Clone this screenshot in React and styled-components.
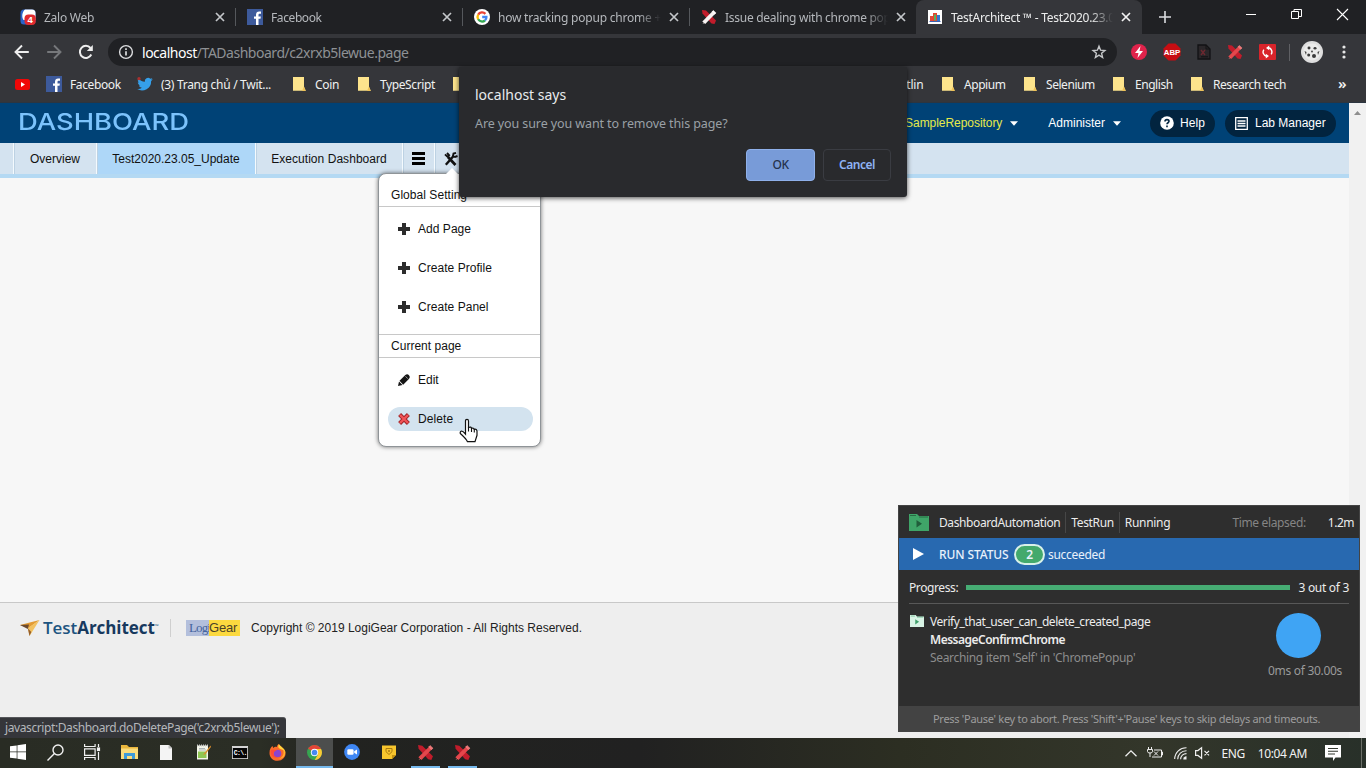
import React from "react";
import styled, { createGlobalStyle } from "styled-components";

const ui = '"Noto Sans", "Open Sans", sans-serif';
const arial = '"Liberation Sans", Arial, sans-serif';

const Global = createGlobalStyle`
  * { box-sizing: border-box; }
  body { margin: 0; overflow: hidden; font-family: ${ui}; font-size: 12px; }
  svg { display: block; flex: none; overflow: visible; }
`;

const Screen = styled.div`
  position: relative;
  width: 1366px;
  height: 768px;
  overflow: hidden;
  display: flex;
  flex-direction: column;
`;

const Label = styled.span`
  white-space: nowrap;
  font-size: ${(p) => p.$size || 12}px;
  letter-spacing: ${(p) => p.$ls ?? -0.3}px;
  color: ${(p) => p.$color || "inherit"};
  font-weight: ${(p) => p.$weight || 400};
`;

/* ---------- browser chrome ---------- */
const TabStrip = styled.div`
  flex: none;
  height: 34px;
  background: #202124;
  display: flex;
  padding-left: 9px;
`;
const Tab = styled.div`
  width: ${(p) => (p.$active ? 226 : 227)}px;
  height: 34px;
  padding: 0 12px 0 ${(p) => (p.$active ? 12 : 11)}px;
  margin-left: ${(p) => (p.$active ? -1 : 0)}px;
  display: flex;
  align-items: center;
  color: ${(p) => (p.$active ? "#eceded" : "#b5b8bc")};
  background: ${(p) => (p.$active ? "#35363a" : "transparent")};
  border-radius: 8px 8px 0 0;
`;
const TabTitle = styled.div`
  width: ${(p) => p.$w || 163}px;
  margin: 0 9px 0 ${(p) => p.$ml || 8}px;
  overflow: hidden;
  white-space: nowrap;
  letter-spacing: ${(p) => p.$ls ?? -0.25}px;
  mask-image: linear-gradient(90deg, #000 86%, transparent);
`;
const TabRule = styled.div`
  width: 1px;
  height: 18px;
  margin: 8px 0 0 -1px;
  background: #55585c;
`;
const WindowButtons = styled.div`
  display: flex;
  align-items: center;
  height: 28px;
  margin-left: auto;
  padding-right: 18px;
  gap: 35px;
`;
const NewTab = styled.div`
  padding: 11px 0 0 17px;
`;
const Toolbar = styled.div`
  flex: none;
  height: 35px;
  background: #35363a;
  display: flex;
  align-items: center;
  padding: 1px 15px 0 14px;
`;
const NavButtons = styled.div`
  display: flex;
  gap: 16px;
  margin-right: 14px;
`;
const Omnibox = styled.div`
  width: 1009px;
  height: 28px;
  border-radius: 14px;
  background: #202124;
  display: flex;
  align-items: center;
  padding: 0 10px;
  color: #8e9195;
`;
const Url = styled.div`
  margin-left: 8px;
  flex: 1;
  font-size: 14px;
  letter-spacing: -0.48px;
  white-space: nowrap;
  b { font-weight: 400; color: #fff; }
`;
const Extensions = styled.div`
  display: flex;
  align-items: center;
  gap: 16px;
  margin-left: 14px;
`;
const ToolRule = styled.div`
  width: 1px;
  height: 17px;
  margin: 0 11px 0 13px;
  background: #5f6064;
`;
const MoreButton = styled.div`
  margin-left: 19px;
`;
const Bookmarks = styled.div`
  flex: none;
  height: 34px;
  background: #35363a;
  border-bottom: 1px solid #2c3540;
  display: flex;
  align-items: center;
  padding: 0 0 3px 15px;
  color: #f0f1f1;
`;
const Bookmark = styled.div`
  flex: none;
  width: ${(p) => p.$w}px;
  display: flex;
  align-items: center;
  gap: ${(p) => p.$gap || 8}px;
`;
const Overflow = styled.div`
  font-size: 15px;
  font-weight: 600;
  line-height: 16px;
  padding: 0 0 2px 2px;
`;

/* ---------- page ---------- */
const PageArea = styled.div`
  height: 635px;
  flex: none;
  display: flex;
  background: #f7f7f7;
  font-family: ${arial};
`;
const Page = styled.div`
  width: 1349px;
  display: flex;
  flex-direction: column;
`;
const ScrollTrack = styled.div`
  width: 17px;
  background: #f1f1f1;
  display: flex;
  justify-content: center;
  padding-top: 8px;
`;
const Header = styled.div`
  height: 40px;
  background: #004276;
  display: flex;
  align-items: center;
  padding: 0 13px 0 18px;
  color: #fff;
`;
const Brand = styled.div`
  font-family: Inter, sans-serif;
  font-size: 23.4px;
  font-weight: 500;
  letter-spacing: 0;
  color: #7cc3fc;
  padding-bottom: 3px;
  margin-right: auto;
  transform: scaleX(1.17);
  transform-origin: left center;
`;
const HeaderLink = styled.div`
  display: flex;
  align-items: center;
  gap: 8px;
  margin-right: ${(p) => p.$mr}px;
  color: ${(p) => (p.$yellow ? "#e6ea4a" : "#fff")};
`;
const Pill = styled.div`
  width: ${(p) => p.$w}px;
  height: 27px;
  margin-left: ${(p) => p.$ml || 0}px;
  border-radius: 14px;
  background: #02243f;
  display: flex;
  align-items: center;
  padding-left: ${(p) => p.$pl}px;
  gap: ${(p) => p.$gap}px;
`;
const NavBar = styled.div`
  height: 35px;
  background: #d4e3f0;
  border-bottom: 4px solid #b4d9f3;
  display: flex;
  padding-left: 13px;
`;
const NavItem = styled.div`
  width: ${(p) => p.$w}px;
  height: 31px;
  border-left: 1px solid #f4fafe;
  box-shadow: inset 1px 0 #bdd2e3;
  background: ${(p) => (p.$active ? "#aed7f8" : "transparent")};
  display: flex;
  align-items: center;
  justify-content: center;
  color: #111;
`;
const Content = styled.div`
  flex: 1;
`;
const Footer = styled.div`
  height: 136px;
  background: #eeeeee;
  border-top: 1px solid #c8c8c8;
  display: flex;
  align-items: flex-start;
  padding: 15px 0 0 20px;
  color: #222;
`;
const FooterItem = styled.div`
  display: flex;
  align-items: center;
  height: 20px;
  margin-right: ${(p) => p.$mr || 0}px;
`;
const TaName = styled.div`
  width: 116px;
  white-space: nowrap;
  font-family: "Open Sans", sans-serif;
  font-size: 17px;
  font-weight: 600;
  letter-spacing: -0.05px;
  color: #1d5480;
  margin: -2px 0 0 3px;
  b { color: #17395e; font-weight: 700; }
  small { font-size: 5px; vertical-align: 6px; letter-spacing: 0; }
`;
const FootRule = styled.div`
  width: 1px;
  height: 18px;
  background: #cfcfcf;
`;
const LogiLogo = styled.div`
  width: 54px;
  height: 16px;
  display: flex;
  font-size: 13px;
  line-height: 16px;
  span:first-child {
    width: 23px;
    padding-left: 3px;
    background: #b3bfdc;
    color: #44639e;
    font-family: "Liberation Serif", serif;
    letter-spacing: -0.9px;
    font-size: 13px;
  }
  span:last-child {
    width: 31px;
    background: #fcd93f;
    color: #4b4128;
    font-family: "Liberation Sans", sans-serif;
    letter-spacing: -0.2px;
  }
`;

/* ---------- settings menu ---------- */
const Menu = styled.div`
  position: absolute;
  left: 378px;
  top: 173px;
  width: 163px;
  height: 274px;
  background: #fff;
  border: 1px solid #8f9498;
  border-radius: 8px;
  box-shadow: 0 0 4px rgba(0, 0, 0, 0.55);
  font-family: ${arial};
  color: #111;
  display: flex;
  flex-direction: column;
`;
const MenuNotch = styled.div`
  position: absolute;
  left: 67px;
  top: -6px;
  border: 6px solid transparent;
  border-top: 0;
  border-bottom-color: #fff;
`;
const MenuHeading = styled.div`
  height: ${(p) => p.$h}px;
  padding: ${(p) => p.$pt}px 0 0 12px;
  line-height: 14px;
  border-top: ${(p) => (p.$top ? "1px solid #c8c8c8" : "0")};
  border-bottom: 1px solid #c8c8c8;
`;
const MenuGroup = styled.div`
  height: ${(p) => p.$h}px;
  padding: 10px 7px 0 9px;
  display: flex;
  flex-direction: column;
  gap: 15px;
`;
const MenuItem = styled.div`
  height: 24px;
  flex: none;
  padding-left: 10px;
  border-radius: 12px;
  display: flex;
  align-items: center;
  gap: 8px;
  background: ${(p) => (p.$hover ? "#d3e3ef" : "transparent")};
`;
const Pointer = styled.svg`
  position: absolute;
  left: 459px;
  top: 418px;
`;

/* ---------- dialog ---------- */
const Dialog = styled.div`
  position: absolute;
  left: 459px;
  top: 67px;
  width: 448px;
  height: 130px;
  background: #292a2d;
  border-radius: 0 0 3px 3px;
  box-shadow: 0 1px 5px rgba(0, 0, 0, 0.7);
  padding: 18px 16px 16px;
  display: flex;
  flex-direction: column;
`;
const DialogTitle = styled.div`
  font-size: 14px;
  line-height: 20px;
  letter-spacing: 0;
  color: #e8eaed;
`;
const DialogText = styled.div`
  margin-top: 10px;
  font-size: 12.5px;
  line-height: 18px;
  letter-spacing: -0.1px;
  color: #9aa0a6;
`;
const DialogActions = styled.div`
  margin-top: auto;
  display: flex;
  justify-content: flex-end;
  gap: 8px;
`;
const DialogButton = styled.div`
  width: ${(p) => (p.$primary ? 69 : 68)}px;
  height: 32px;
  padding-bottom: 1px;
  border-radius: 4px;
  border: 1px solid ${(p) => (p.$primary ? "#8fb0ea" : "#3a3c42")};
  background: ${(p) => (p.$primary ? "#789bd8" : "transparent")};
  color: ${(p) => (p.$primary ? "#25324c" : "#8fb3f5")};
  font-weight: ${(p) => (p.$primary ? 500 : 600)};
  font-size: 12px;
  letter-spacing: -0.5px;
  display: flex;
  align-items: center;
  justify-content: center;
`;

const StatusBubble = styled.div`
  position: absolute;
  left: 0;
  top: 717px;
  width: 286px;
  height: 21px;
  padding-left: 5px;
  background: #35363a;
  border-radius: 0 3px 0 0;
  border-top: 1px solid #55565a;
  color: #b4b7ba;
  line-height: 20px;
`;

/* ---------- run panel ---------- */
const RunPanel = styled.div`
  position: absolute;
  left: 898px;
  top: 505px;
  width: 462px;
  height: 227px;
  background: #2e2e2e;
  border: 1px solid #444;
  color: #ececec;
  display: flex;
  flex-direction: column;
`;
const RunHead = styled.div`
  height: 32px;
  display: flex;
  align-items: center;
  padding: 0 5px 0 10px;
  gap: 5px;
`;
const ProjectName = styled.div`
  margin-left: 5px;
`;
const RunRule = styled.div`
  width: 1px;
  height: 21px;
  background: #474747;
`;
const Elapsed = styled.div`
  margin: 0 17px 0 auto;
  color: #858585;
`;
const RunStatus = styled.div`
  height: 32px;
  background: #2869b0;
  display: flex;
  align-items: center;
  padding-left: 14px;
  color: #e8f1fb;
`;
const StatusName = styled.div`
  width: 70px;
  margin-left: 15px;
`;
const CountBadge = styled.div`
  width: 31px;
  height: 21px;
  margin: 0 3px 0 5px;
  border: 2px solid #d8f0e8;
  border-radius: 11px;
  background: #43a96c;
  display: flex;
  align-items: center;
  justify-content: center;
`;
const ProgressRow = styled.div`
  height: 34px;
  margin: 0 10px;
  padding-top: 2px;
  display: flex;
  align-items: center;
  justify-content: space-between;
  border-bottom: 1px solid #585858;
`;
const ProgressBar = styled.div`
  width: 324px;
  height: 5px;
  background: #46ad74;
`;
const TestRow = styled.div`
  flex: 1;
  display: flex;
  padding: 9px 17px 0 11px;
`;
const TestIcon = styled.div`
  padding-top: 2px;
`;
const TestText = styled.div`
  margin-left: 6px;
  flex: 1;
  display: flex;
  flex-direction: column;
  line-height: 18px;
`;
const Timer = styled.div`
  display: flex;
  flex-direction: column;
  align-items: center;
  gap: 4px;
`;
const TimerDisc = styled.div`
  width: 45px;
  height: 45px;
  margin-right: 13px;
  border-radius: 50%;
  background: #3fa4f4;
`;
const PanelFoot = styled.div`
  height: 25px;
  background: #434343;
  display: flex;
  align-items: center;
  padding-left: 34px;
`;

/* ---------- taskbar ---------- */
const Taskbar = styled.div`
  flex: none;
  height: 30px;
  background: linear-gradient(90deg, #292c24 0, #2b2e25 260px, #222320 330px, #212121 640px, #2c2e22 900px, #33362a 1150px, #283029 1366px);
  display: flex;
  color: #f3f3f3;
`;
const TaskButton = styled.div`
  width: 37px;
  height: 30px;
  display: flex;
  align-items: center;
  justify-content: center;
  background: ${(p) => (p.$active ? "#4c4e4d" : "transparent")};
  border-bottom: 2px solid ${(p) => (p.$open ? "#76b9ed" : "transparent")};
  background-clip: padding-box;
  ${(p) => p.$open && !p.$active && "width: 29px; margin: 0 4px;"}
  &:nth-child(-n + 9) {
    padding-right: 1px;
  }
`;
const Tray = styled.div`
  margin-left: auto;
  display: flex;
  align-items: center;
`;
const TrayItem = styled.div`
  margin-right: ${(p) => p.$mr}px;
`;
const ShowDesktop = styled.div`
  width: 5px;
  height: 30px;
  border-left: 1px solid #6b6f68;
`;

/* ---------- drawings ---------- */
const Close = ({ size = 8, color = "#c4c7ca", sw = 1.7 }) => (
  <svg width={size} height={size} viewBox="0 0 8 8">
    <path d="M0 0L8 8M8 0L0 8" stroke={color} strokeWidth={(sw * 8) / size} />
  </svg>
);
const FacebookIcon = () => (
  <svg width="16" height="16" viewBox="0 0 16 16">
    <rect width="16" height="16" fill="#3d5a9b" />
    <path d="M9 16V9.800H7V7.400h2V5.800C9 3.600 10.200 2.400 12.200 2.400h1.800v2.300h-1.300c-.9 0-1.200.4-1.200 1.300v1.400h2.400l-.4 2.400h-2V16z" fill="#fff" />
  </svg>
);
const ZaloIcon = () => (
  <svg width="16" height="16" viewBox="0 0 16 16">
    <path d="M4 .5h8A3.500 3.500 0 0 1 15.500 4v8a3.500 3.500 0 0 1-3.500 3.500H4A3.500 3.500 0 0 1 .5 12V4A3.500 3.500 0 0 1 4 .5z" fill="#2a62c9" />
    <path d="M5 .5h7A3.500 3.500 0 0 1 15.500 4v7H3.500C1.500 8 2 3 5 .5z" fill="#fff" />
    <rect x="4.500" y="5.500" width="11.300" height="10.500" rx="4" fill="#e02a2d" />
    <text x="10.200" y="14.200" textAnchor="middle" fontFamily="Liberation Sans, sans-serif" fontWeight="700" fontSize="9.500" fill="#fff">4</text>
  </svg>
);
const GoogleIcon = () => (
  <svg width="16" height="16" viewBox="0 0 16 16">
    <circle cx="8" cy="8" r="8" fill="#fff" />
    <g fill="none" strokeWidth="2.300">
      <path d="M11.400 4.900A4.500 4.500 0 0 0 4.200 5.700" stroke="#ea4335" />
      <path d="M4.200 5.700a4.500 4.500 0 0 0 0 4.600" stroke="#fbbc05" />
      <path d="M4.200 10.300a4.500 4.500 0 0 0 6.800 1.200" stroke="#34a853" />
      <path d="M11 11.500A4.500 4.500 0 0 0 12.400 8H8.200" stroke="#4285f4" />
    </g>
  </svg>
);
const XTool = ({ s = 16, light }) => (
  <svg width={s} height={s} viewBox="0 0 16 16">
    <path d="M1 1l4 .6 10 10-1.500 3.400-3-.6L1.500 4.500z" fill="#c11c2b" />
    <path d="M1.300 12.500L12 1.800l2.700 2.400L4.200 15z" fill={light ? "#f8f2f2" : "#e4474c"} />
    <path d="M11 2.800l1.300-1.300 2.700 2.400-1.300 1.400zM2 14.800l1.500-1.500" stroke={light ? "#f8f2f2" : "#ef8585"} fill={light ? "#fff" : "#ee7777"} strokeWidth=".6" />
  </svg>
);
const ChartIcon = () => (
  <svg width="14" height="14" viewBox="0 0 14 14">
    <rect width="14" height="14" fill="#fff" />
    <rect x="2" y="6" width="3" height="5" fill="#e14a3b" />
    <rect x="5" y="3" width="4" height="8" fill="#e8432f" />
    <rect x="6" y="4.500" width="2" height="6" fill="#59b05f" />
    <rect x="9" y="5" width="3" height="6" fill="#3179cf" />
    <path d="M1.500 11.500h11" stroke="#3d5fb0" />
  </svg>
);
const Arrow = ({ flip, color }) => (
  <svg width="16" height="16" viewBox="0 0 16 16">
    <path d="M14.800 8H1.800M8 1.500L1.500 8L8 14.500" fill="none" stroke={color} strokeWidth="1.900" transform={flip ? "rotate(180 8 8)" : undefined} />
  </svg>
);
const Reload = () => (
  <svg width="16" height="16" viewBox="0 0 16 16">
    <path d="M13.300 10.500A6 6 0 1 1 12.500 4" fill="none" stroke="#eee" strokeWidth="2" />
    <path d="M14.800 1v6H8.800z" fill="#eee" />
  </svg>
);
const Info = () => (
  <svg width="16" height="16" viewBox="0 0 16 16">
    <circle cx="8" cy="8" r="6.400" fill="none" stroke="#dcdddf" strokeWidth="1.400" />
    <path d="M8 7.200v4.300M8 4.300v1.700" stroke="#dcdddf" strokeWidth="1.700" />
  </svg>
);
const Star = () => (
  <svg width="16" height="16" viewBox="0 0 16 16">
    <path d="M8 2.200l1.600 4 4.300.3-3.300 2.800 1 4.200L8 11.200l-3.600 2.300 1-4.200L2.100 6.500l4.300-.3z" fill="none" stroke="#c6c8ca" strokeWidth="1.400" />
  </svg>
);
const BoltIcon = () => (
  <svg width="16" height="16" viewBox="0 0 16 16">
    <circle cx="8" cy="8" r="8" fill="#e0234b" />
    <path d="M9.500 2L4 9h3.500L6.500 14 12 7H8.500z" fill="#fff" />
  </svg>
);
const AbpIcon = () => (
  <svg width="18" height="18" viewBox="0 0 18 18">
    <path d="M5.500 0.500h7l5 5v7l-5 5h-7l-5-5v-7z" fill="#c70d12" />
    <text x="9" y="11.800" textAnchor="middle" fontFamily="Liberation Sans, sans-serif" fontWeight="700" fontSize="7.800" fill="#fff">ABP</text>
  </svg>
);
const DocIcon = () => (
  <svg width="14" height="16" viewBox="0 0 14 16">
    <path d="M1 1h8l4 4v10H1z" fill="#2a2629" stroke="#121214" strokeWidth="1.300" />
    <path d="M9 1v4h4M4 12.800h7" fill="none" stroke="#121214" />
    <path d="M4 6l4 5M8 6l-4 5" stroke="#6d2830" strokeWidth="1.400" />
  </svg>
);
const SyncIcon = () => (
  <svg width="17" height="16" viewBox="0 0 17 16">
    <rect width="17" height="16" rx="1" fill="#d9242b" />
    <path d="M9.500 3.800a4.200 4.200 0 0 1 2.600 6.600M7.500 12.200a4.200 4.200 0 0 1-2.600-6.600" fill="none" stroke="#fff" strokeWidth="1.400" />
    <path d="M10.200 1.500L7 3.900l3.200 2.300zM6.800 9.800L10 12.100l-3.200 2.400z" fill="#fff" />
  </svg>
);
const Avatar = () => (
  <svg width="22" height="22" viewBox="0 0 22 22">
    <circle cx="11" cy="11" r="11" fill="#dedede" />
    <circle cx="11" cy="11" r="8.500" fill="#ebebea" />
    <g fill="#3b3b3b">
      <ellipse cx="8" cy="7" rx="1.500" ry="1.400" />
      <ellipse cx="14" cy="7.200" rx="1.500" ry="1.300" />
      <path d="M3.500 10l2 1-.5 3zM18.500 10l-2 1 .5 3z" />
      <circle cx="7.700" cy="14" r="1.500" />
      <circle cx="13" cy="15" r="2" />
      <circle cx="11" cy="10.500" r=".9" />
    </g>
  </svg>
);
const Dots = () => (
  <svg width="4" height="14" viewBox="0 0 4 14" fill="#e6e6e6">
    <circle cx="2" cy="2" r="1.600" /><circle cx="2" cy="7" r="1.600" /><circle cx="2" cy="12" r="1.600" />
  </svg>
);
const YouTube = () => (
  <svg width="15" height="11" viewBox="0 0 15 11">
    <rect width="15" height="11" rx="2.500" fill="#f00707" />
    <path d="M6 3l4 2.500L6 8z" fill="#fff" />
  </svg>
);
const Twitter = () => (
  <svg width="16" height="16" viewBox="0 0 24 24">
    <path fill="#35a0ea" d="M23.600 4.900c-.8.400-1.700.6-2.700.8 1-.6 1.700-1.500 2.100-2.600-.9.500-1.900.9-3 1.100a4.800 4.800 0 0 0-8.200 4.400C7.800 8.400 4.300 6.500 1.900 3.600c-1.300 2.200-.6 5 1.500 6.400-.8 0-1.500-.2-2.200-.6 0 2.300 1.600 4.300 3.800 4.800-.7.200-1.400.2-2.100.1.600 1.900 2.400 3.300 4.500 3.300A9.700 9.700 0 0 1 .3 19.600 13.700 13.700 0 0 0 21.200 7.400c.9-.7 1.800-1.500 2.400-2.500z" />
    <circle cx="3" cy="4" r="2.500" fill="#a9302f" />
  </svg>
);
const Folder = () => (
  <svg width="13" height="14" viewBox="0 0 13 14">
    <path d="M0 0h11v10l1.800 3.800H0z" fill="#fde48c" />
    <path d="M11 9.500l1.800 4.500H9z" fill="#eec258" />
  </svg>
);
const Caret = () => (
  <svg width="8" height="5" viewBox="0 0 8 5"><path d="M0 .2h8L4 4.700z" fill="#fff" /></svg>
);
const HelpIcon = () => (
  <svg width="14" height="14" viewBox="0 0 14 14">
    <circle cx="7" cy="7" r="6.800" fill="#fff" />
    <path d="M5 5.500C5 3 9 3 9 5.300 9 6.800 7 6.700 7 8.300M7 9.500v1.700" fill="none" stroke="#02243f" strokeWidth="1.600" />
  </svg>
);
const LabIcon = () => (
  <svg width="13" height="13" viewBox="0 0 13 13">
    <path d="M.7.7h11.600v11.600H.7zM2.500 4h8M2.500 6.500h8M2.500 9h8" fill="none" stroke="#fff" strokeWidth="1.300" />
  </svg>
);
const Bars = () => (
  <svg width="13" height="13" viewBox="0 0 13 13"><path d="M0 1.500h13M0 6.500h13M0 11.500h13" stroke="#000" strokeWidth="3" /></svg>
);
const Tools = () => (
  <svg width="14" height="14" viewBox="0 0 14 14">
    <path d="M4 5l7.500 8" stroke="#111" strokeWidth="2.800" />
    <path d="M10 3.500L1.800 12.800" stroke="#111" strokeWidth="2.400" />
    <path d="M1 2.300l2.500 2.500 1.600-1.500L3 1" fill="none" stroke="#111" strokeWidth="1.900" />
    <path d="M13.500 4L11 5 9 4l.5-2.500L12 .8" fill="none" stroke="#111" strokeWidth="1.900" />
  </svg>
);
const Plus = () => (
  <svg width="12" height="12" viewBox="0 0 12 12"><path d="M6 0v12M0 6h12" stroke="#2c2c2c" strokeWidth="4" /></svg>
);
const Pencil = () => (
  <svg width="12" height="12" viewBox="0 0 12 12">
    <path d="M0 12l1-4.500 3.500 3.500zM1.500 6.800L7.300 1q2-1.500 3.700.2t.1 3.600L5.200 10.700z" fill="#141414" />
    <path d="M7.500 2.300l2.300 2.400" stroke="#bbb" strokeWidth=".8" />
  </svg>
);
const RedX = () => (
  <svg width="12" height="12" viewBox="0 0 12 12">
    <path d="M1.600 1.600L10.400 10.400M10.400 1.600L1.600 10.400" stroke="#a02428" strokeWidth="4.200" />
    <path d="M2 2L10 10M10 2L2 10" stroke="#f15458" strokeWidth="2.400" />
  </svg>
);
const TaArrow = () => (
  <svg width="20" height="16" viewBox="0 0 20 16">
    <path d="M0 5L19.500 0 8.500 8z" fill="#e39b33" />
    <path d="M19.500 0L9.500 16 8 8z" fill="#f2c15f" />
    <path d="M0 5l9-.5L7.800 9z" fill="#6b4a2f" />
    <path d="M7.800 8.200L9.500 16l1.800-4z" fill="#97602a" />
  </svg>
);
const RunFolder = ({ w = 20, h = 17, body = "#3fa568", mark = "#215e3b" }) => (
  <svg width={w} height={h} viewBox="0 0 20 17" preserveAspectRatio="none">
    <path d="M0 0h8l2 2h10v15H0z" fill={body} />
    <path d="M1 1.500h6M10 3h9" stroke={mark} strokeWidth=".8" />
    <path d="M7.500 6l5.500 3.700-5.500 3.700z" fill={mark} />
  </svg>
);
const PlayIcon = () => (
  <svg width="11" height="12" viewBox="0 0 11 12"><path d="M0 0l11 6-11 6z" fill="#fff" /></svg>
);
const WindowsLogo = () => (
  <svg width="16" height="16" viewBox="0 0 16 16" fill="#fff">
    <path d="M0 2.300l6.700-.9v6.200H0zM7.400 1.300L16 0v7.600H7.400zM0 8.300h6.700v6.300L0 13.700zM7.400 8.300H16V16l-8.600-1.200z" />
  </svg>
);
const SearchIcon = () => (
  <svg width="17" height="17" viewBox="0 0 17 17" fill="none" stroke="#f1f1f1" strokeWidth="1.400">
    <circle cx="11" cy="6" r="5" /><path d="M7.400 9.600L.5 16.500" />
  </svg>
);
const TaskView = () => (
  <svg width="17" height="16" viewBox="0 0 17 16" fill="none" stroke="#f1f1f1" strokeWidth="1.200">
    <path d="M.6 0v2.500h10.500V0M.6 16v-2.500h10.500V16M.6 4.800h10.500v6.500H.6zM14.500 0v3M14.500 8v8" />
    <rect x="13.500" y="4" width="2" height="2.500" fill="#fff" />
  </svg>
);
const Explorer = () => (
  <svg width="17" height="15" viewBox="0 0 17 15">
    <path d="M0 0h6l2 2h9v12H0z" fill="#e9b63c" /><path d="M0 3.500h17V14H0z" fill="#fbdc7c" />
    <path d="M3 8h11v6h-3v-3H6v3H3z" fill="#3f9bd8" />
  </svg>
);
const FilePage = () => (
  <svg width="12" height="15" viewBox="0 0 12 15"><path d="M0 0h9l3 3v12H0z" fill="#f4f4f4" /><path d="M8.500 0v3.500H12" fill="#bbb" /></svg>
);
const NotePad = () => (
  <svg width="15" height="16" viewBox="0 0 15 16">
    <rect x="1" y="1.500" width="11" height="14" fill="#f4f6ea" /><path d="M1 1.500h11" stroke="#ccc" strokeWidth="2" strokeDasharray="1 1" />
    <rect x="2" y="7.500" width="8.500" height="6.500" fill="#8fc653" /><path d="M3 4.500h6M3 6h7" stroke="#8e9aa0" strokeWidth=".7" />
    <path d="M14.500 1.500L8.500 9l-1.500 2 2.500-1L15 3z" fill="#d98c2b" />
  </svg>
);
const Cmd = () => (
  <svg width="16" height="13" viewBox="0 0 16 13">
    <rect x=".4" y=".4" width="15.200" height="12.200" fill="#050505" stroke="#ddd" strokeWidth=".8" /><path d="M.5 1.200h15" stroke="#eee" strokeWidth="1.400" />
    <text x="1.800" y="9.300" fontFamily="Liberation Mono, monospace" fontWeight="700" fontSize="6.500" letterSpacing="-.7" fill="#fff">C:\.</text>
  </svg>
);
const Firefox = () => (
  <svg width="17" height="17" viewBox="0 0 17 17">
    <path d="M.5 9C.5 5 2 3 3.500 2l.8 2C5.500 2.500 7 2.500 8 3c0-1.500.6-2.400 2-3 .3 2 5.500 3.500 6.500 8.500.5 4.500-3 8.300-8 8.300S.5 13 .5 9z" fill="#fb6a2a" />
    <path d="M10 0c.3 2 5.500 3.500 6.500 8.500-2-3-4-3-6-4S9.500 1 10 0z" fill="#ffd53c" />
    <circle cx="8.500" cy="9.500" r="3.800" fill="#8a44cf" />
    <path d="M2 6c2-1 4-.5 6 1-2 0-3 .5-3.500 2S5.500 13 8.500 13.500c-5 1-7.500-3-6.500-7.500z" fill="#ff4b37" />
    <path d="M14 5.500c2 5-1 9-5 9.500 5 .5 8-4 7-8z" fill="#ffb52e" />
  </svg>
);
const Chrome = () => (
  <svg width="15" height="15" viewBox="0 0 16 16">
    <circle cx="8" cy="8" r="8" fill="#36a550" />
    <path d="M8 8L1.100 4A8 8 0 0 1 14.900 4z" fill="#e44437" />
    <path d="M8 8V4.200h7A8 8 0 0 1 8.200 16l3.500-6z" fill="#fcc934" />
    <circle cx="8" cy="8" r="3.900" fill="#fff" /><circle cx="8" cy="8" r="3" fill="#4688f1" />
  </svg>
);
const Zoom = () => (
  <svg width="16" height="16" viewBox="0 0 16 16">
    <circle cx="8" cy="8" r="7.900" fill="#3f87f4" />
    <rect x="3.300" y="5.200" width="6.300" height="5.600" rx="1.300" fill="#fff" /><path d="M10.200 7.300l2.800-1.900v5.200l-2.800-1.900z" fill="#fff" />
  </svg>
);
const Sticky = () => (
  <svg width="14" height="14" viewBox="0 0 14 14">
    <path d="M0 .5h14V10l-4 4H0z" fill="#f7c52d" /><path d="M10 14v-4h4z" fill="#c4910f" />
    <path d="M4 3.500h6v3.200L7 9.500 4 6.700z" fill="none" stroke="#a8790f" strokeWidth="1" /><circle cx="7" cy="6" r="1" fill="#a8790f" />
  </svg>
);
const TrayUp = () => (
  <svg width="12" height="7" viewBox="0 0 12 7"><path d="M.5 6.300L6 .8l5.500 5.500" fill="none" stroke="#eee" strokeWidth="1.300" /></svg>
);
const Battery = () => (
  <svg width="16" height="12" viewBox="0 0 16 12" fill="none" stroke="#eee" strokeWidth="1">
    <path d="M7 3h7.500v7H5M14.500 5h1v3h-1M1.500 0v2.500M4.500 0v2.500M.5 2.500h5v2q0 1.500-2.500 1.500T.5 4.500zM3 6v4M7 4.500l4 4M11 4.500l-4 4" />
  </svg>
);
const Wifi = () => (
  <svg width="13" height="13" viewBox="0 0 13 13" fill="none" stroke="#eee" strokeWidth="1.100">
    <path d="M.7 12A11.500 11.500 0 0 1 12.500.8M3.700 12.300a8.600 8.600 0 0 1 8.800-8.600M6.600 12.300a5.800 5.800 0 0 1 5.900-5.700" />
    <path d="M9.300 12.500a3 3 0 0 1 3.200-3.200v3.200z" fill="#eee" stroke="none" />
  </svg>
);
const Mute = () => (
  <svg width="15" height="12" viewBox="0 0 15 12" fill="none" stroke="#eee" strokeWidth="1.200">
    <path d="M.6 3.600h2.300L6.600.8v10.400L2.900 8.400H.6zM9.500 3.800l4.500 4.500M14 3.800L9.500 8.300" />
  </svg>
);
const Notice = () => (
  <svg width="16" height="16" viewBox="0 0 16 16">
    <path d="M0 0h16v12.500h-5.500L8 16v-3.500H0z" fill="#fff" /><path d="M3 3.500h10M3 6.300h10M3 9h7" stroke="#33382f" strokeWidth="1.100" />
  </svg>
);

const tabs = [
  { title: "Zalo Web", icon: <ZaloIcon />, rule: true, ls: -0.25 },
  { title: "Facebook", icon: <FacebookIcon />, rule: true, ls: -0.4 },
  { title: "how tracking popup chrome + te", icon: <GoogleIcon />, rule: true, ls: -0.22 },
  { title: "Issue dealing with chrome popup", icon: <XTool light />, ls: -0.27 },
];
const folders = [
  ["Appium", 82],
  ["Selenium", 89],
  ["English", 78],
  ["Research tech", 145],
];
const taskIcons = [WindowsLogo, SearchIcon, TaskView, Explorer, FilePage, NotePad, Cmd, Firefox];

export default function App() {
  return (
    <>
      <Global />
      <Screen>
        <TabStrip>
          {tabs.map((t) => (
            <React.Fragment key={t.title}>
              <Tab>
                {t.icon}
                <TabTitle $ls={t.ls}>{t.title}</TabTitle>
                <Close />
              </Tab>
              {t.rule && <TabRule />}
            </React.Fragment>
          ))}
          <Tab $active>
            <ChartIcon />
            <TabTitle $w={163} $ml={9} $ls={-0.27}>TestArchitect ™ - Test2020.23.05_Up</TabTitle>
            <Close color="#f2f2f2" />
          </Tab>
          <NewTab>
            <svg width="12" height="12" viewBox="0 0 12 12"><path d="M6 0v12M0 6h12" stroke="#dadcdf" strokeWidth="1.600" /></svg>
          </NewTab>
          <WindowButtons>
            <svg width="10" height="10" viewBox="0 0 10 10"><path d="M0 5.500h10" stroke="#fff" /></svg>
            <svg width="11" height="10" viewBox="0 0 11 10"><path d="M.5 2.500h7v7h-7zM3 2.500v-2h7.500v7H7.500" fill="none" stroke="#fff" /></svg>
            <Close size={11} color="#fff" sw={1.1} />
          </WindowButtons>
        </TabStrip>

        <Toolbar>
          <NavButtons>
            <Arrow color="#eee" />
            <Arrow flip color="#76787b" />
            <Reload />
          </NavButtons>
          <Omnibox>
            <Info />
            <Url><b>localhost</b>/TADashboard/c2xrxb5lewue.page</Url>
            <Star />
          </Omnibox>
          <Extensions>
            <BoltIcon />
            <AbpIcon />
            <DocIcon />
            <XTool />
            <SyncIcon />
          </Extensions>
          <ToolRule />
          <Avatar />
          <MoreButton><Dots /></MoreButton>
        </Toolbar>

        <Bookmarks>
          <Bookmark $w={31}><YouTube /></Bookmark>
          <Bookmark $w={91}><FacebookIcon /><Label $ls={-0.38}>Facebook</Label></Bookmark>
          <Bookmark $w={156}><Twitter /><Label>(3) Trang chủ / Twit...</Label></Bookmark>
          <Bookmark $w={65} $gap={9}><Folder /><Label>Coin</Label></Bookmark>
          <Bookmark $w={95} $gap={9}><Folder /><Label $ls={-0.4}>TypeScript</Label></Bookmark>
          <Bookmark $w={439} $gap={9}><Folder /></Bookmark>
          <Bookmark $w={50}><Label $ls={-0.2}>Kotlin</Label></Bookmark>
          {folders.map(([name, w]) => (
            <Bookmark key={name} $w={w} $gap={9}><Folder /><Label $ls={-0.45}>{name}</Label></Bookmark>
          ))}
          <Overflow>»</Overflow>
        </Bookmarks>

        <PageArea>
          <Page>
            <Header>
              <Brand>DASHBOARD</Brand>
              <HeaderLink $yellow $mr={30}><Label $ls={-0.05}>SampleRepository</Label><Caret /></HeaderLink>
              <HeaderLink $mr={29}><Label $ls={0}>Administer</Label><Caret /></HeaderLink>
              <Pill $w={65} $pl={10} $gap={6}><HelpIcon /><Label $ls={0.1}>Help</Label></Pill>
              <Pill $w={111} $pl={10} $ml={10} $gap={7}><LabIcon /><Label $ls={0}>Lab Manager</Label></Pill>
            </Header>
            <NavBar>
              <NavItem $w={83}><Label $ls={0}>Overview</Label></NavItem>
              <NavItem $w={159} $active><Label $ls={0}>Test2020.23.05_Update</Label></NavItem>
              <NavItem $w={147}><Label $ls={0.05}>Execution Dashboard</Label></NavItem>
              <NavItem $w={32}><Bars /></NavItem>
              <NavItem $w={32}><Tools /></NavItem>
            </NavBar>
            <Content />
            <Footer>
              <FooterItem $mr={11}><TaArrow /><TaName>Test<b>Architect</b><small>™</small></TaName></FooterItem>
              <FooterItem $mr={15}><FootRule /></FooterItem>
              <FooterItem $mr={11}><LogiLogo><span>Logi</span><span>Gear</span></LogiLogo></FooterItem>
              <FooterItem><Label $ls={0}>Copyright © 2019 LogiGear Corporation - All Rights Reserved.</Label></FooterItem>
            </Footer>
          </Page>
          <ScrollTrack>
            <svg width="7" height="4" viewBox="0 0 7 4"><path d="M0 4L3.500 0 7 4z" fill="#8e8e8e" /></svg>
          </ScrollTrack>
        </PageArea>

        <Taskbar>
          {taskIcons.map((Icon, i) => (
            <TaskButton key={i}><Icon /></TaskButton>
          ))}
          <TaskButton $active $open><Chrome /></TaskButton>
          <TaskButton><Zoom /></TaskButton>
          <TaskButton><Sticky /></TaskButton>
          <TaskButton $open><XTool s={17} /></TaskButton>
          <TaskButton $open><XTool s={17} /></TaskButton>
          <Tray>
            <TrayItem $mr={10}><TrayUp /></TrayItem>
            <TrayItem $mr={11}><Battery /></TrayItem>
            <TrayItem $mr={8}><Wifi /></TrayItem>
            <TrayItem $mr={12}><Mute /></TrayItem>
            <TrayItem $mr={13}><Label $ls={-0.4}>ENG</Label></TrayItem>
            <TrayItem $mr={18}><Label $ls={-0.4}>10:04 AM</Label></TrayItem>
            <TrayItem $mr={20}><Notice /></TrayItem>
            <ShowDesktop />
          </Tray>
        </Taskbar>

        <Menu>
          <MenuNotch />
          <MenuHeading $h={33} $pt={14}><Label $ls={0.05}>Global Setting</Label></MenuHeading>
          <MenuGroup $h={127}>
            {["Add Page", "Create Profile", "Create Panel"].map((t) => (
              <MenuItem key={t}><Plus /><Label $ls={0.04}>{t}</Label></MenuItem>
            ))}
          </MenuGroup>
          <MenuHeading $h={24} $pt={4} $top><Label $ls={0.02}>Current page</Label></MenuHeading>
          <MenuGroup $h={85}>
            <MenuItem><Pencil /><Label $ls={0}>Edit</Label></MenuItem>
            <MenuItem $hover><RedX /><Label $ls={0.1}>Delete</Label></MenuItem>
          </MenuGroup>
        </Menu>
        <Pointer width="20" height="25" viewBox="0 0 20 25">
          <path d="M6.500 15V3Q6.500 1.300 8 1.300T9.500 3v6.500q2.700-1 3 .8 2.300-.7 2.700 1 2.300-.5 2.800 1.500v4.500l-2 6.400H8.500Q7 20.500 1.300 15.500q-.5-2 1.200-2.500 1.500 0 4 3z" fill="#fff" stroke="#111" strokeWidth="1.200" />
          <path d="M9.500 9v4.500M12.500 10v4M15.300 11v3.500" stroke="#111" strokeWidth="1.100" />
        </Pointer>

        <Dialog>
          <DialogTitle>localhost says</DialogTitle>
          <DialogText>Are you sure you want to remove this page?</DialogText>
          <DialogActions>
            <DialogButton $primary>OK</DialogButton>
            <DialogButton>Cancel</DialogButton>
          </DialogActions>
        </Dialog>

        <StatusBubble><Label $ls={-0.4}>javascript:Dashboard.doDeletePage('c2xrxb5lewue');</Label></StatusBubble>

        <RunPanel>
          <RunHead>
            <RunFolder />
            <ProjectName><Label $ls={-0.4}>DashboardAutomation</Label></ProjectName>
            <RunRule />
            <Label $ls={-0.35}>TestRun</Label>
            <RunRule />
            <Label>Running</Label>
            <Elapsed><Label $ls={-0.35}>Time elapsed:</Label></Elapsed>
            <Label $ls={-0.5}>1.2m</Label>
          </RunHead>
          <RunStatus>
            <PlayIcon />
            <StatusName><Label $weight={500} $ls={-0.1}>RUN STATUS</Label></StatusName>
            <CountBadge><Label $weight={600}>2</Label></CountBadge>
            <Label>succeeded</Label>
          </RunStatus>
          <ProgressRow>
            <Label $ls={-0.4}>Progress:</Label>
            <ProgressBar />
            <Label>3 out of 3</Label>
          </ProgressRow>
          <TestRow>
            <TestIcon><RunFolder w={14} h={12} body="#d8f3e5" mark="#3f9f6a" /></TestIcon>
            <TestText>
              <Label $ls={-0.43}>Verify_that_user_can_delete_created_page</Label>
              <Label $weight={600} $ls={-0.5}>MessageConfirmChrome</Label>
              <Label $color="#8c8c8c" $ls={-0.33}>Searching item 'Self' in 'ChromePopup'</Label>
            </TestText>
            <Timer>
              <TimerDisc />
              <Label $color="#9a9a9a">0ms of 30.00s</Label>
            </Timer>
          </TestRow>
          <PanelFoot>
            <Label $size={11} $ls={-0.29} $color="#9d9d9d">Press 'Pause' key to abort. Press 'Shift'+'Pause' keys to skip delays and timeouts.</Label>
          </PanelFoot>
        </RunPanel>
      </Screen>
    </>
  );
}
